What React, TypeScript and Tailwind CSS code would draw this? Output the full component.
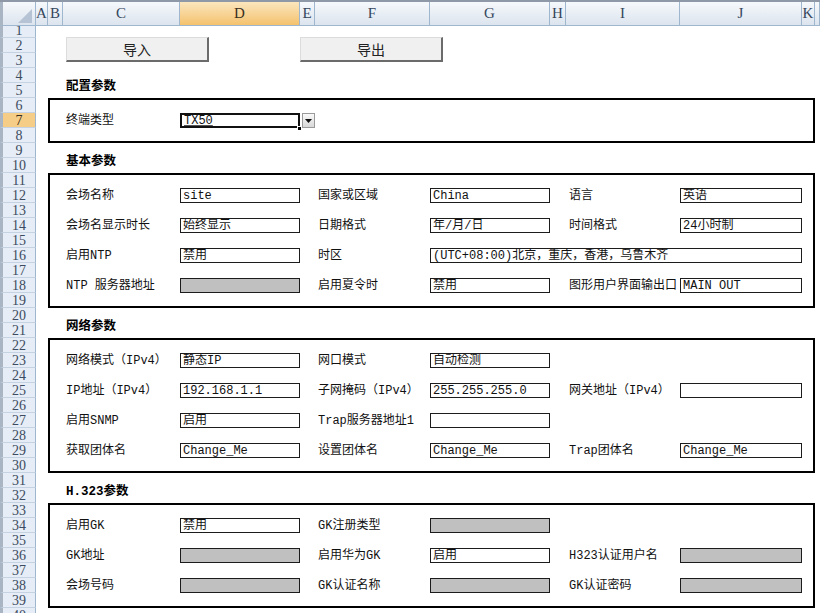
import React from "react";

type Cell = { label: string; value?: string; gray?: boolean; wide?: boolean; blank?: boolean };
type Row = { r: number; cells: (Cell | null)[] };

const ROW_START: Record<number, string> = {
  7: "row-start-7",
  12: "row-start-12",
  14: "row-start-14",
  16: "row-start-16",
  18: "row-start-18",
  23: "row-start-23",
  25: "row-start-25",
  27: "row-start-27",
  29: "row-start-29",
  34: "row-start-34",
  36: "row-start-36",
  38: "row-start-38",
};

// label columns C / F / I, value columns D / G / J
const LABEL_COL = ["col-start-3", "col-start-6", "col-start-9"];
const VALUE_COL = ["col-start-4", "col-start-7", "col-start-10"];

const ROWS: Row[] = [
  {
    r: 12,
    cells: [
      { label: "会场名称", value: "site" },
      { label: "国家或区域", value: "China" },
      { label: "语言", value: "英语" },
    ],
  },
  {
    r: 14,
    cells: [
      { label: "会场名显示时长", value: "始终显示" },
      { label: "日期格式", value: "年/月/日" },
      { label: "时间格式", value: "24小时制" },
    ],
  },
  {
    r: 16,
    cells: [
      { label: "启用NTP", value: "禁用" },
      { label: "时区", value: "(UTC+08:00)北京，重庆，香港，乌鲁木齐", wide: true },
      null,
    ],
  },
  {
    r: 18,
    cells: [
      { label: "NTP 服务器地址", gray: true },
      { label: "启用夏令时", value: "禁用" },
      { label: "图形用户界面输出口", value: "MAIN OUT" },
    ],
  },
  {
    r: 23,
    cells: [
      { label: "网络模式（IPv4）", value: "静态IP" },
      { label: "网口模式", value: "自动检测" },
      null,
    ],
  },
  {
    r: 25,
    cells: [
      { label: "IP地址（IPv4）", value: "192.168.1.1" },
      { label: "子网掩码（IPv4）", value: "255.255.255.0" },
      { label: "网关地址（IPv4）", value: "" },
    ],
  },
  {
    r: 27,
    cells: [
      { label: "启用SNMP", value: "启用" },
      { label: "Trap服务器地址1", value: "" },
      null,
    ],
  },
  {
    r: 29,
    cells: [
      { label: "获取团体名", value: "Change_Me" },
      { label: "设置团体名", value: "Change_Me" },
      { label: "Trap团体名", value: "Change_Me" },
    ],
  },
  {
    r: 34,
    cells: [
      { label: "启用GK", value: "禁用" },
      { label: "GK注册类型", gray: true },
      null,
    ],
  },
  {
    r: 36,
    cells: [
      { label: "GK地址", gray: true },
      { label: "启用华为GK", value: "启用" },
      { label: "H323认证用户名", gray: true },
    ],
  },
  {
    r: 38,
    cells: [
      { label: "会场号码", gray: true },
      { label: "GK认证名称", gray: true },
      { label: "GK认证密码", gray: true },
    ],
  },
];

const LETTERS = ["A", "B", "C", "D", "E", "F", "G", "H", "I", "J", "K", ""];

function ColHeader({ letter }: { letter: string }) {
  const on = letter === "D";
  return (
    <div
      className={
        "flex items-center justify-center border-r border-b border-[#9eb6ce] " +
        (on
          ? "bg-linear-to-b from-[#fbe6bd] to-[#f4c26c] text-[#3a3020]"
          : "bg-linear-to-b from-[#f6f9fc] to-[#dce4ee] text-[#35465c]")
      }
    >
      {letter}
    </div>
  );
}

function TitleCell({ row, text }: { row: string; text: string }) {
  return (
    <div className={`col-start-3 ${row} col-span-3 flex items-end pl-[3px] pb-[1px] text-[12.5px] font-bold whitespace-nowrap text-black`}>
      {text}
    </div>
  );
}

export default function App() {
  return (
    <div className="w-[820px] h-[613px] overflow-hidden bg-white border-t-2 border-[#8e98a6] font-['Liberation_Mono','Noto_Sans_CJK_SC',monospace] text-[12px] text-[#111]">
      {/* column headers */}
      <div className="grid h-[21px] grid-cols-[36px_12px_15px_117px_120px_15px_115px_120px_16px_114px_122px_13px_1fr] font-['Liberation_Serif',serif] text-[15px]">
        <div className="relative border-l-[3px] border-r border-b border-[#9eb6ce] border-l-[#aab5c3] bg-linear-to-b from-[#f6f9fc] to-[#dce4ee]">
          <svg className="absolute right-[3px] bottom-[2px]" width="14" height="14" viewBox="0 0 14 14">
            <polygon points="14,0 14,14 0,14" fill="#b6c3d4" />
          </svg>
        </div>
        {LETTERS.map((l, i) => (
          <ColHeader key={i} letter={l} />
        ))}
      </div>

      <div className="flex">
        {/* row numbers */}
        <div className="flex w-[36px] shrink-0 flex-col font-['Liberation_Serif',serif] text-[14px]">
          {Array.from({ length: 40 }, (_, i) => i + 1).map((n) => (
            <div
              key={n}
              className={
                "flex h-[15px] shrink-0 items-center justify-center overflow-hidden border-l-[3px] border-l-[#aab5c3] border-r border-b border-r-[#9eb6ce] border-b-[#c5d2e2] leading-[13px] " +
                (n === 7 ? "bg-[#f6cd86] text-[#3a3020]" : "bg-[#e6edf6] text-[#3c4b60]")
              }
            >
              {n}
            </div>
          ))}
        </div>

        {/* sheet */}
        <div className="grid flex-1 grid-cols-[12px_15px_117px_120px_15px_115px_120px_16px_114px_122px_13px_1fr] grid-rows-[repeat(40,15px)]">
          {/* buttons */}
          <button className="col-start-3 row-start-2 col-span-2 row-span-2 ml-[3px] mt-[-1px] h-[25px] w-[143px] border border-t-[#dcdcdc] border-l-[#dcdcdc] border-r-2 border-b-2 border-r-[#6b6b6b] border-b-[#6b6b6b] bg-[#f0f0f0] font-['Noto_Sans_CJK_SC',sans-serif] text-[14px] text-[#222]">
            导入
          </button>
          <button className="col-start-5 row-start-2 col-span-3 row-span-2 mt-[-1px] h-[25px] w-[143px] border border-t-[#dcdcdc] border-l-[#dcdcdc] border-r-2 border-b-2 border-r-[#6b6b6b] border-b-[#6b6b6b] bg-[#f0f0f0] font-['Noto_Sans_CJK_SC',sans-serif] text-[14px] text-[#222]">
            导出
          </button>

          {/* section boxes */}
          <div className="col-start-2 row-start-6 col-span-10 row-span-3 border-2 border-black" />
          <div className="col-start-2 row-start-11 col-span-10 row-span-9 border-2 border-black" />
          <div className="col-start-2 row-start-22 col-span-10 row-span-9 border-2 border-black" />
          <div className="col-start-2 row-start-33 col-span-10 row-span-7 border-2 border-black" />

          <TitleCell row="row-start-5" text="配置参数" />
          <TitleCell row="row-start-10" text="基本参数" />
          <TitleCell row="row-start-21" text="网络参数" />
          <TitleCell row="row-start-32" text="H.323参数" />

          {/* terminal type */}
          <div className="col-start-3 row-start-7 flex items-center pl-[3px] whitespace-nowrap">终端类型</div>
          <div className="relative col-start-4 row-start-7 flex items-center border-2 border-[#111] pl-[2px]">
            <span className="underline decoration-[#555]">TX50</span>
            <div className="absolute right-[-4px] bottom-[-5px] h-[5px] w-[5px] border border-white bg-black" />
          </div>
          <div className="col-start-5 row-start-7 ml-[2px] flex h-[15px] w-[13px] items-center justify-center border border-[#9a9a9a] bg-linear-to-b from-[#fafafa] to-[#d8d8d8]">
            <svg width="7" height="4" viewBox="0 0 7 4">
              <polygon points="0,0 7,0 3.5,4" fill="#111" />
            </svg>
          </div>

          {ROWS.map((row) =>
            row.cells.map((c, i) =>
              c ? (
                <React.Fragment key={`${row.r}-${i}`}>
                  <div className={`${LABEL_COL[i]} ${ROW_START[row.r]} flex items-center pl-[3px] whitespace-nowrap`}>
                    {c.label}
                  </div>
                  <div
                    className={
                      `${VALUE_COL[i]} ${ROW_START[row.r]} flex items-center overflow-hidden whitespace-nowrap border border-[#1c1c1c] pl-[2px] ` +
                      (c.gray ? "bg-[#c0c0c0] " : "bg-white ") +
                      (c.wide ? "col-span-4" : "")
                    }
                  >
                    {c.value}
                  </div>
                </React.Fragment>
              ) : null
            )
          )}
        </div>
      </div>
    </div>
  );
}
